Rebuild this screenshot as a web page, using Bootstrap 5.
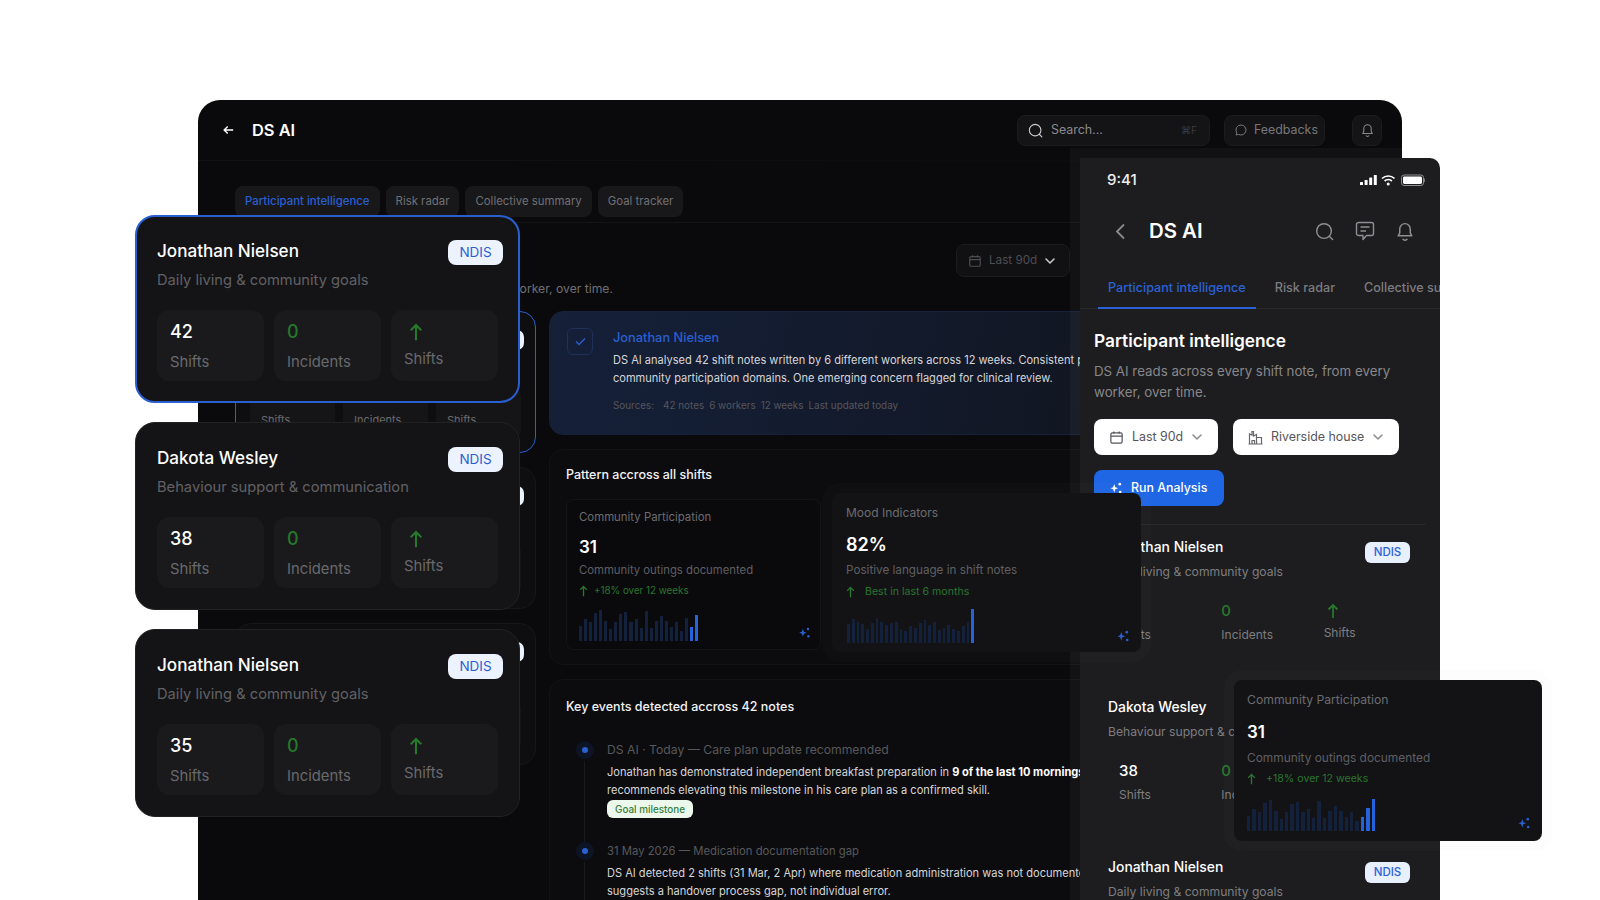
<!DOCTYPE html>
<html>
<head>
<meta charset="utf-8">
<meta name="viewport" content="width=device-width, initial-scale=1">
<title>DS AI</title>
<link href="https://cdn.jsdelivr.net/npm/bootstrap@5.3.3/dist/css/bootstrap.min.css" rel="stylesheet">
<script src="https://cdn.jsdelivr.net/npm/bootstrap@5.3.3/dist/js/bootstrap.bundle.min.js"></script>
<style>
body { background: #fff; font-family: Inter, "Liberation Sans", sans-serif; overflow: hidden; }
svg { display: block; flex: none; }
.stage { position: relative; width: 1600px; height: 900px; overflow: hidden; }

/* desktop window */
.desk { position: absolute; left: 198px; top: 100px; width: 1204px; height: 800px; background: #0a0a0c; border-radius: 22px 22px 0 0; overflow: hidden; color: #fff; }
.desk-head { height: 60px; padding: 0 20px 0 25px; }
.desk-title { font-size: 16.4px; font-weight: 600; margin-left: 18px; }
.tool-box { height: 31px; background: #141416; border: 1px solid #1c1c1f; border-radius: 8px; font-size: 12.4px; color: #77777b; }
.tool-search { width: 193px; padding: 0 12px 0 10px; color: #8a8a8e; }
.tool-kbd { font-size: 10px; color: #3c3c40; margin-left: auto; }
.tool-fb { width: 101px; margin-left: 14px; padding-left: 10px; gap: 7px; }
.tool-bell { width: 30px; margin-left: 27px; justify-content: center; }
.desk-rule { height: 1px; background: linear-gradient(90deg, #131315 0%, #111113 20%, #0c0c0e 60%); }
.desk-tabs { margin-top: 25px; padding: 0 0 5px 37px; gap: 6px; border-bottom: 1px solid #141416; }
.desk-tab { height: 31px; padding: 0 10px; background: #18181a; border-radius: 8px; font-size: 11.4px; color: #707074; display: flex; align-items: center; }
.desk-tab.on { color: #2a5fd0; font-weight: 500; }
.desk-intro { height: 88px; padding: 0 332px 0 37px; }
.intro-h { font-size: 17px; font-weight: 600; margin-bottom: 6px; }
.intro-p { font-size: 12.2px; color: #6f6f73; margin: 0 0 -3px; white-space: nowrap; }
.range-box { position: relative; top: -18px; height: 33px; width: 114px; padding-left: 11px; gap: 7px; color: #4e4e52; background: #111113; font-size: 11.7px; }
.desk-body { padding-left: 37px; gap: 13px; }
.list-col { width: 301px; flex: none; gap: 14px; }
.main-col { width: 900px; flex: none; gap: 14px; }
.mini-card { height: 142px; border: 1px solid #17171a; border-radius: 16px; background: #0e0e10; padding: 14px; position: relative; }
.mini-card.on { border-color: #2a5fd0; }
.mini-pill { position: absolute; right: 11px; top: 18px; width: 40px; height: 20px; border-radius: 7px; background: #edf2ff; }
.mini-stats { position: absolute; left: 14px; right: 14px; bottom: 14px; height: 50px; gap: 8px; }
.mini-stats div { flex: 1; background: #151517; border-radius: 8px; font-size: 11px; color: #6a6a6e; padding: 24px 0 0 11px; }

.ai-card { height: 124px; border: 1px solid #17203a; border-radius: 14px; background: linear-gradient(100deg, #152039 0%, #121929 45%, #111114 85%); padding: 14px 17px; gap: 20px; }
.check-box { width: 26px; height: 27px; margin-top: 2px; border: 1px solid #1e3158; border-radius: 6px; flex: none; }
.ai-name { color: #2a5fd0; font-size: 12.8px; font-weight: 500; line-height: 24px; }
.ai-text { font-size: 11.05px; line-height: 17.5px; color: #d6d6d9; white-space: nowrap; margin: 2px 0 0; }
.ai-src { font-size: 9.9px; color: #56565c; margin-top: 11px; gap: 5px; }
.panel-box { border: 1px solid #131316; border-radius: 14px; padding: 16px; background: #0c0c0e; }
.panel-pat { height: 216px; }
.panel-h { font-size: 12.5px; font-weight: 500; color: #f2f2f4; line-height: 18px; }
.metric-card { position: relative; width: 255px; height: 151px; margin-top: 15px; border: 1px solid #141417; border-radius: 8px; padding: 9px 12px; background: #0a0a0c; }
.metric-t { font-size: 11.4px; color: #6c6c70; line-height: 16px; }
.metric-n { font-size: 17px; font-weight: 600; color: #fff; line-height: 22px; margin-top: 11px; }
.metric-d { font-size: 11.3px; color: #5f5f63; line-height: 16px; margin-top: 4px; }
.metric-g { font-size: 9.8px; color: #2a7530; line-height: 14px; margin-top: 6px; gap: 6px; }
.bars { position: absolute; display: flex; align-items: flex-end; gap: 2px; height: 32px; }
.bars i { display: block; flex: 1; background: #14213c; }
.bars i.hi { background: #2562dc; }
.spark-at { position: absolute; color: #2a5fd0; }
.panel-ev { height: 240px; padding-top: 18px; }
.ev-list { margin-top: 27px; padding-left: 41px; }
.ev-item { position: relative; padding-bottom: 26px; }
.ev-dot { position: absolute; left: -31px; top: -2px; width: 18px; height: 18px; border-radius: 50%; background: #0d1426; }
.ev-dot::after { content: ""; position: absolute; left: 6px; top: 6px; width: 6px; height: 6px; border-radius: 50%; background: #2a5fd0; }
.ev-line { position: absolute; left: -23px; top: 18px; bottom: 0; width: 1px; background: #1a1a1d; }
.ev-meta { font-size: 11.3px; line-height: 14px; color: #58585c; }
.ev-meta.wide { font-size: 12.2px; }
.ev-text { font-size: 11.05px; line-height: 17.5px; color: #d6d6d9; white-space: nowrap; margin: 7px 0 0; }
.ev-text b { color: #fff; font-weight: 700; }
.goal-pill { display: block; width: fit-content; margin-top: 1px; height: 18px; line-height: 18px; padding: 0 8px; border-radius: 6px; background: #ecf8ec; color: #34803a; font-size: 9.9px; font-weight: 500; }

/* participant cards on the left */
.stack-col { position: absolute; left: 135px; top: 215px; width: 385px; gap: 19px; z-index: 5; }
.big-card { height: 188px; background: #141416; border: 1px solid #222225; border-radius: 20px; padding: 23px 16px 0 21px; color: #fff; }
.big-card.on { border: 2px solid #2a5fd0; padding: 22px 15px 0 20px; }
.big-name { font-size: 17.1px; font-weight: 500; line-height: 24px; }
.big-sub { font-size: 14.7px; color: #616165; line-height: 20px; margin-top: 5px; }
.ndis-tag { width: 55px; height: 25px; margin-top: 1px; border-radius: 8px; background: #edf2ff; color: #2a5fd0; font-size: 13.5px; font-weight: 400; display: flex; align-items: center; justify-content: center; }
.big-stats { gap: 10px; margin-top: 20px; padding-right: 5px; }
.big-stat { flex: 1; height: 71px; border-radius: 12px; background: #1a1a1c; padding: 10px 0 0 13px; }
.big-num { font-size: 18px; font-weight: 500; line-height: 24px; }
.big-lab { font-size: 14.8px; line-height: 20px; color: #69696d; margin-top: 8px; }
.txt-green { color: #26782b; }
.big-stat svg { color: #26782b; margin: 2px 0 2px 5px; }
.big-stat svg + .big-lab { margin-top: 7px; }

/* phone */
.phone { position: absolute; left: 1080px; top: 158px; width: 360px; height: 742px; background: #1d1d1f; border-radius: 0 10px 0 0; box-shadow: 0 0 0 10px rgba(255,255,255,.035); color: #fff; overflow: hidden; z-index: 2; }
.phone-status { height: 42px; padding: 2px 15px 0 27px; font-size: 15px; font-weight: 500; color: #eee; }
.phone-head { height: 62px; padding: 0 26px 0 35px; }
.phone-title { font-size: 20.4px; font-weight: 600; margin-left: 23px; }
.phone-tabs { padding-left: 18px; height: 47px; gap: 9px; border-bottom: 1px solid #2a2a2c; white-space: nowrap; }
.phone-tab { padding: 3px 10px 0; font-size: 12.6px; font-weight: 500; color: #7c7c80; line-height: 45px; height: 47px; }
.phone-tab.on { color: #2a62d6; border-bottom: 2px solid #2a62d6; }
.phone-main { padding: 19px 14px 0; }
.phone-h { font-size: 17.3px; font-weight: 600; line-height: 26px; }
.phone-p { font-size: 13.3px; line-height: 21px; color: #87878b; margin: 7px 0 0; }
.sel-box { height: 36px; border-radius: 8px; background: #fff; color: #55555a; font-size: 12.4px; padding-left: 15px; gap: 8px; }
.sel-a { width: 124px; }
.sel-b { width: 166px; margin-left: 15px; }
.run-btn { width: 130px; height: 36px; margin-top: 15px; border: 0; border-radius: 8px; background: #1f66e5; color: #fff; font-size: 12.4px; font-weight: 500; padding: 0 0 0 15px; gap: 8px; }
.phone-line { margin: 18px 0 2px; height: 1px; background: #28282a; }
.ph-card { position: relative; height: 160px; padding: 10px 0 0 14px; }
.ph-name { font-size: 13.9px; font-weight: 500; line-height: 20px; }
.ph-sub { font-size: 12.15px; color: #7d7d81; line-height: 18px; margin-top: 6px; }
.ph-tag { position: absolute; right: 16px; top: 15px; width: 45px; height: 21px; border-radius: 6px; background: #e8effd; color: #2a62d6; font-size: 11.5px; font-weight: 500; display: flex; align-items: center; justify-content: center; }
.ph-stats { margin: 20px 0 0 11px; }
.ph-stat { width: 103px; }
.ph-num { font-size: 15px; font-weight: 500; line-height: 20px; }
.ph-lab { font-size: 12px; color: #7d7d81; line-height: 18px; margin-top: 5px; }

/* floating metric cards */
.float-card { position: absolute; margin: 0; border: 0; background: #131315; box-shadow: 0 0 0 10px rgba(150,150,155,.025); z-index: 4; }
.float-mood { left: 832px; top: 493px; width: 309px; height: 159px; padding: 12px 14px; }
.float-comm { left: 1234px; top: 680px; width: 308px; height: 161px; padding: 12px 13px; border-radius: 8px; }
.float-comm .metric-n { margin-top: 13px; }
.float-comm .metric-t { font-size: 12.2px; }
.float-comm .metric-d { font-size: 11.9px; margin-top: 7px; }
.float-comm .metric-g { font-size: 10.6px; }
.float-mood .metric-d { font-size: 11.7px; margin-top: 6px; }
.float-mood .metric-t { font-size: 12px; }
.float-mood .metric-n { font-size: 18px; margin-top: 13px; }
.float-mood .metric-g { font-size: 10.6px; margin-top: 7px; }
</style>
</head>
<body>

<svg width="0" height="0" style="position:absolute">
  <symbol id="ic-spark" viewBox="0 0 16 16"><path d="M6 3.5 7.3 7 10.5 8.2 7.3 9.5 6 13 4.7 9.5 1.5 8.2 4.7 7Z" fill="currentColor"/><circle cx="12.3" cy="3.6" r="1.5" fill="currentColor"/><circle cx="12.8" cy="12.6" r="1.5" fill="currentColor"/></symbol>
  <symbol id="ic-up" viewBox="0 0 12 16"><path d="M6 15V2M1.5 6.5 6 2l4.5 4.5" fill="none" stroke="currentColor" stroke-width="1.8"/></symbol>
  <symbol id="ic-search" viewBox="0 0 20 20"><circle cx="9.5" cy="9.5" r="7.7" fill="none" stroke="currentColor" stroke-width="1.5"/><path d="m15 15 3.5 3.5" stroke="currentColor" stroke-width="1.5" stroke-linecap="round"/></symbol>
  <symbol id="ic-bell" viewBox="2.5 1.5 15 17.5"><path d="M4 14.5h12l-1.4-2.6V8.4a4.6 4.6 0 0 0-9.2 0v3.5ZM8 17a2.2 2.2 0 0 0 4 0" fill="none" stroke="currentColor" stroke-width="1.3" stroke-linejoin="round"/></symbol>
  <symbol id="ic-cal" viewBox="0 0 16 16"><rect x="2" y="3" width="12" height="11" rx="1.5" fill="none" stroke="currentColor" stroke-width="1.3"/><path d="M2 6.5h12M5.2 1.5V4M10.8 1.5V4" stroke="currentColor" stroke-width="1.3"/></symbol>
  <symbol id="ic-chev" viewBox="0 0 12 12"><path d="m2 4 4 4 4-4" fill="none" stroke="currentColor" stroke-width="1.6" stroke-linecap="round" stroke-linejoin="round"/></symbol>
</svg>

<div class="stage">

  <!-- desktop window -->
  <div class="desk">
    <div class="desk-head d-flex align-items-center">
      <svg width="11" height="10" viewBox="0 0 14 12"><path d="M13 6H2M6 1.5 1.5 6 6 10.5" fill="none" stroke="#fff" stroke-width="1.8"/></svg>
      <div class="desk-title">DS AI</div>
      <div class="ms-auto d-flex align-items-center">
        <div class="tool-box tool-search d-flex align-items-center gap-2">
          <svg width="15" height="15" style="color:#c8c8cc"><use href="#ic-search"/></svg>
          <span>Search...</span><span class="tool-kbd">⌘F</span>
        </div>
        <div class="tool-box tool-fb d-flex align-items-center">
          <svg width="12" height="12" viewBox="0 0 12 12"><path d="M6 1a5 5 0 1 1-2.4 9.4L1 11l.7-2.4A5 5 0 0 1 6 1Z" fill="none" stroke="#77777b" stroke-width="1"/></svg>
          <span>Feedbacks</span>
        </div>
        <div class="tool-box tool-bell d-flex align-items-center">
          <svg width="13" height="14" style="color:#8a8a8e"><use href="#ic-bell"/></svg>
        </div>
      </div>
    </div>
    <div class="desk-rule"></div>
    <div class="desk-tabs d-flex">
      <div class="desk-tab on">Participant intelligence</div>
      <div class="desk-tab">Risk radar</div>
      <div class="desk-tab">Collective summary</div>
      <div class="desk-tab">Goal tracker</div>
    </div>
    <div class="desk-intro d-flex align-items-end justify-content-between pb-3">
      <div>
        <div class="intro-h">Participant intelligence</div>
        <p class="intro-p">DS AI reads across every shift note, from every worker, over time.</p>
      </div>
      <div class="tool-box range-box d-flex align-items-center">
        <svg width="14" height="14"><use href="#ic-cal"/></svg>
        <span>Last 90d</span>
        <svg width="12" height="12" style="color:#c8c8cc"><use href="#ic-chev"/></svg>
      </div>
    </div>
    <div class="desk-body d-flex">
      <div class="list-col d-flex flex-column">
        <div class="mini-card on"><span class="mini-pill"></span><div class="mini-stats d-flex"><div>Shifts</div><div>Incidents</div><div>Shifts</div></div></div>
        <div class="mini-card"><span class="mini-pill"></span><div class="mini-stats d-flex"><div>Shifts</div><div>Incidents</div><div>Shifts</div></div></div>
        <div class="mini-card"><span class="mini-pill"></span><div class="mini-stats d-flex"><div>Shifts</div><div>Incidents</div><div>Shifts</div></div></div>
      </div>
      <div class="main-col d-flex flex-column">
        <div class="ai-card d-flex">
          <div class="check-box d-flex align-items-center justify-content-center">
            <svg width="11" height="9" viewBox="0 0 11 9"><path d="m1 4.5 3 3 6-6" fill="none" stroke="#2a5fd0" stroke-width="1.3"/></svg>
          </div>
          <div>
            <div class="ai-name">Jonathan Nielsen</div>
            <p class="ai-text">DS AI analysed 42 shift notes written by 6 different workers across 12 weeks. Consistent progress across daily living and<br>community participation domains. One emerging concern flagged for clinical review.</p>
            <div class="ai-src d-flex"><span class="me-1">Sources:</span><span>42 notes</span><span>6 workers</span><span>12 weeks</span><span>Last updated today</span></div>
          </div>
        </div>
        <div class="panel-box panel-pat">
          <div class="panel-h">Pattern accross all shifts</div>
          <div class="metric-card">
            <div class="metric-t">Community Participation</div>
            <div class="metric-n">31</div>
            <div class="metric-d">Community outings documented</div>
            <div class="metric-g d-flex align-items-center"><svg width="9" height="12"><use href="#ic-up"/></svg><span>+18% over 12 weeks</span></div>
            <div class="bars" data-h="48,70,60,88,96,62,38,60,84,90,58,70,40,94,42,62,78,62,44,60,32,72,44,80" data-hi="2" style="left:12px;bottom:8px;width:119px"></div>
            <svg class="spark-at" width="13" height="13" style="right:9px;bottom:10px"><use href="#ic-spark"/></svg>
          </div>
        </div>
        <div class="panel-box panel-ev">
          <div class="panel-h">Key events detected accross 42 notes</div>
          <div class="ev-list">
            <div class="ev-item">
              <span class="ev-dot"></span><span class="ev-line"></span>
              <div class="ev-meta wide">DS AI · Today — Care plan update recommended</div>
              <p class="ev-text">Jonathan has demonstrated independent breakfast preparation in <b>9 of the last 10 mornings</b>. DS AI<br>recommends elevating this milestone in his care plan as a confirmed skill.</p>
              <span class="goal-pill">Goal milestone</span>
            </div>
            <div class="ev-item">
              <span class="ev-dot"></span><span class="ev-line"></span>
              <div class="ev-meta">31 May 2026 — Medication documentation gap</div>
              <p class="ev-text">DS AI detected 2 shifts (31 Mar, 2 Apr) where medication administration was not documented. Pattern<br>suggests a handover process gap, not individual error.</p>
            </div>
          </div>
        </div>
      </div>
    </div>
  </div>

  <!-- phone -->
  <div class="phone">
    <div class="phone-status d-flex align-items-center justify-content-between">
      <span>9:41</span>
      <svg width="65" height="12" viewBox="0 0 65 12">
        <g fill="#fff"><rect x="0" y="8" width="3" height="3" rx=".6"/><rect x="4.6" y="6" width="3" height="5" rx=".6"/><rect x="9.2" y="3.5" width="3" height="7.5" rx=".6"/><rect x="13.8" y="1" width="3" height="10" rx=".6"/></g>
        <path d="M22 4.5a9 9 0 0 1 12.5 0M24.6 7a5.4 5.4 0 0 1 7.3 0" fill="none" stroke="#fff" stroke-width="1.7"/><circle cx="28.2" cy="10" r="1.5" fill="#fff"/>
        <rect x="41.5" y="1" width="22" height="10.5" rx="2.6" fill="none" stroke="#8f8f93"/><rect x="43" y="2.5" width="19" height="7.5" rx="1.4" fill="#fff"/><rect x="64.2" y="4.5" width=".8" height="3.5" fill="#8f8f93"/>
      </svg>
    </div>
    <div class="phone-head d-flex align-items-center">
      <svg width="11" height="17" viewBox="0 0 11 17"><path d="M9 1.5 2 8.5l7 7" fill="none" stroke="#8a8a8e" stroke-width="1.8"/></svg>
      <div class="phone-title">DS AI</div>
      <div class="ms-auto d-flex align-items-center" style="gap:21px;color:#8f8f93">
        <svg width="19" height="19"><use href="#ic-search"/></svg>
        <svg width="20" height="20" viewBox="0 0 20 20"><path d="M3.5 1.5h13a2 2 0 0 1 2 2v9a2 2 0 0 1-2 2h-5L8 18.5v-4H3.5a2 2 0 0 1-2-2v-9a2 2 0 0 1 2-2Z" fill="none" stroke="currentColor" stroke-width="1.4" stroke-linejoin="round"/><path d="M5.5 6h9M5.5 10h5.5" stroke="currentColor" stroke-width="1.4"/></svg>
        <svg width="18" height="20"><use href="#ic-bell"/></svg>
      </div>
    </div>
    <div class="phone-tabs d-flex">
      <div class="phone-tab on">Participant intelligence</div>
      <div class="phone-tab">Risk radar</div>
      <div class="phone-tab">Collective summary</div>
    </div>
    <div class="phone-main">
      <div class="phone-h">Participant intelligence</div>
      <p class="phone-p">DS AI reads across every shift note, from every<br>worker, over time.</p>
      <div class="d-flex mt-3">
        <div class="sel-box sel-a d-flex align-items-center">
          <svg width="15" height="15"><use href="#ic-cal"/></svg><span>Last 90d</span>
          <svg width="12" height="12" style="color:#8f8f93"><use href="#ic-chev"/></svg>
        </div>
        <div class="sel-box sel-b d-flex align-items-center">
          <svg width="15" height="15" viewBox="0 0 15 15"><path d="M1.5 14V4l2.5 1V1.5h1.5V6l3-1.5V14M8.5 7.5h5V14M.5 14h14M4 14v-3.5h2.5V14" fill="none" stroke="#66666a" stroke-width="1.2"/></svg><span>Riverside house</span>
          <svg width="12" height="12" style="color:#8f8f93"><use href="#ic-chev"/></svg>
        </div>
      </div>
      <button class="run-btn d-flex align-items-center"><svg width="14" height="14"><use href="#ic-spark"/></svg><span>Run Analysis</span></button>
      <div class="phone-line"></div>
      <div class="ph-card">
        <div class="ph-name">Jonathan Nielsen</div>
        <div class="ph-sub">Daily living &amp; community goals</div>
        <span class="ph-tag">NDIS</span>
        <div class="ph-stats d-flex">
          <div class="ph-stat"><div class="ph-num">42</div><div class="ph-lab">Shifts</div></div>
          <div class="ph-stat"><div class="ph-num txt-green">0</div><div class="ph-lab">Incidents</div></div>
          <div class="ph-stat"><svg class="txt-green" width="12" height="16" style="margin:2px 0 1px 3px"><use href="#ic-up"/></svg><div class="ph-lab">Shifts</div></div>
        </div>
      </div>
      <div class="ph-card">
        <div class="ph-name">Dakota Wesley</div>
        <div class="ph-sub">Behaviour support &amp; communication</div>
        <span class="ph-tag">NDIS</span>
        <div class="ph-stats d-flex">
          <div class="ph-stat"><div class="ph-num">38</div><div class="ph-lab">Shifts</div></div>
          <div class="ph-stat"><div class="ph-num txt-green">0</div><div class="ph-lab">Incidents</div></div>
          <div class="ph-stat"><svg class="txt-green" width="12" height="16" style="margin:2px 0 1px 3px"><use href="#ic-up"/></svg><div class="ph-lab">Shifts</div></div>
        </div>
      </div>
      <div class="ph-card">
        <div class="ph-name">Jonathan Nielsen</div>
        <div class="ph-sub">Daily living &amp; community goals</div>
        <span class="ph-tag">NDIS</span>
      </div>
    </div>
  </div>

  <!-- floating metric cards -->
  <div class="metric-card float-card float-mood">
    <div class="metric-t">Mood Indicators</div>
    <div class="metric-n">82%</div>
    <div class="metric-d">Positive language in shift notes</div>
    <div class="metric-g d-flex align-items-center"><svg width="9" height="12"><use href="#ic-up"/></svg><span class="ms-1">Best in last 6 months</span></div>
    <div class="bars" data-h="55,72,62,56,40,60,74,62,52,58,62,42,34,50,44,60,68,54,62,38,44,52,42,36,50,62,100" data-hi="1" style="left:15px;bottom:9px;width:127px;height:34px"></div>
    <svg class="spark-at" width="14" height="14" style="right:11px;bottom:9px"><use href="#ic-spark"/></svg>
  </div>
  <div class="metric-card float-card float-comm">
    <div class="metric-t">Community Participation</div>
    <div class="metric-n">31</div>
    <div class="metric-d">Community outings documented</div>
    <div class="metric-g d-flex align-items-center"><svg width="9" height="12"><use href="#ic-up"/></svg><span class="ms-1">+18% over 12 weeks</span></div>
    <div class="bars" data-h="48,70,60,88,96,62,38,60,84,90,58,70,40,94,42,62,78,62,44,60,32,44,72,100" data-hi="3" style="left:13px;bottom:10px;width:128px;height:32px"></div>
    <svg class="spark-at" width="14" height="14" style="right:11px;bottom:11px"><use href="#ic-spark"/></svg>
  </div>

  <!-- participant cards -->
  <div class="stack-col d-flex flex-column">
    <div class="big-card on">
      <div class="d-flex justify-content-between"><div class="big-name">Jonathan Nielsen</div><span class="ndis-tag">NDIS</span></div>
      <div class="big-sub">Daily living &amp; community goals</div>
      <div class="big-stats d-flex">
        <div class="big-stat"><div class="big-num">42</div><div class="big-lab">Shifts</div></div>
        <div class="big-stat"><div class="big-num txt-green">0</div><div class="big-lab">Incidents</div></div>
        <div class="big-stat"><svg width="14" height="20"><use href="#ic-up"/></svg><div class="big-lab">Shifts</div></div>
      </div>
    </div>
    <div class="big-card">
      <div class="d-flex justify-content-between"><div class="big-name">Dakota Wesley</div><span class="ndis-tag">NDIS</span></div>
      <div class="big-sub">Behaviour support &amp; communication</div>
      <div class="big-stats d-flex">
        <div class="big-stat"><div class="big-num">38</div><div class="big-lab">Shifts</div></div>
        <div class="big-stat"><div class="big-num txt-green">0</div><div class="big-lab">Incidents</div></div>
        <div class="big-stat"><svg width="14" height="20"><use href="#ic-up"/></svg><div class="big-lab">Shifts</div></div>
      </div>
    </div>
    <div class="big-card">
      <div class="d-flex justify-content-between"><div class="big-name">Jonathan Nielsen</div><span class="ndis-tag">NDIS</span></div>
      <div class="big-sub">Daily living &amp; community goals</div>
      <div class="big-stats d-flex">
        <div class="big-stat"><div class="big-num">35</div><div class="big-lab">Shifts</div></div>
        <div class="big-stat"><div class="big-num txt-green">0</div><div class="big-lab">Incidents</div></div>
        <div class="big-stat"><svg width="14" height="20"><use href="#ic-up"/></svg><div class="big-lab">Shifts</div></div>
      </div>
    </div>
  </div>
</div>

<script>
// sparkline bars, last few are highlighted
document.querySelectorAll('.bars').forEach(function (box) {
  var vals = box.dataset.h.split(',');
  var hi = +box.dataset.hi;
  vals.forEach(function (v, i) {
    var bar = document.createElement('i');
    bar.style.height = v + '%';
    if (i >= vals.length - hi) bar.className = 'hi';
    box.appendChild(bar);
  });
});
</script>
</body>
</html>
